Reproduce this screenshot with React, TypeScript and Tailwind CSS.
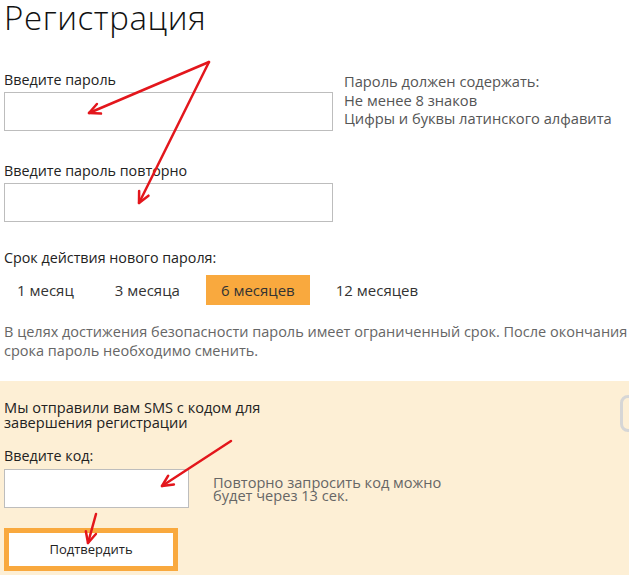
import React from "react";

const RED = "#e3161c";

function Arrow({ x1, y1, x2, y2 }: { x1: number; y1: number; x2: number; y2: number }) {
  const a = Math.atan2(y2 - y1, x2 - x1);
  const len = 12;
  const spread = 0.45;
  const hx1 = x2 - len * Math.cos(a - spread);
  const hy1 = y2 - len * Math.sin(a - spread);
  const hx2 = x2 - len * Math.cos(a + spread);
  const hy2 = y2 - len * Math.sin(a + spread);
  return (
    <g stroke={RED} strokeWidth={2.5} strokeLinecap="round" strokeLinejoin="round" fill="none">
      <line x1={x1} y1={y1} x2={x2} y2={y2} />
      <polyline points={`${hx1},${hy1} ${x2},${y2} ${hx2},${hy2}`} />
    </g>
  );
}

const periods = ["1 месяц", "3 месяца", "6 месяцев", "12 месяцев"];

export default function App() {
  return (
    <div className="relative w-[629px] h-[575px] overflow-hidden bg-white font-['Open_Sans','Noto_Sans',sans-serif] text-[#222]">
      <div className="px-[4px]">
        <h1 className="text-[33px] leading-[36px] font-light text-[#111] tracking-[0.6px]">Регистрация</h1>

        {/* Password fields */}
        <div className="flex mt-[34px]">
          <div className="w-[329px]">
            <label className="block text-[14.3px] leading-[20px] text-[#222]">Введите пароль</label>
            <div className="mt-[2px] h-[39px] border border-[#bdbdbd] bg-white" />
            <label className="block mt-[30px] text-[14.3px] leading-[20px] text-[#222]">Введите пароль повторно</label>
            <div className="mt-[2px] h-[39px] border border-[#bdbdbd] bg-white" />
          </div>
          <div className="ml-[11px] mt-[2px] text-[14.7px] leading-[18.5px] text-[#555] whitespace-nowrap">
            <p>Пароль должен содержать:</p>
            <p>Не менее 8 знаков</p>
            <p>Цифры и буквы латинского алфавита</p>
          </div>
        </div>

        {/* Password lifetime */}
        <p className="mt-[26px] text-[14.3px] leading-[20px] text-[#222]">Срок действия нового пароля:</p>
        <div className="flex gap-[11px] mt-[7px] -ml-[2px]">
          {periods.map((p) => (
            <div
              key={p}
              className={`h-[30px] px-[15px] flex items-center text-[15px] text-[#333] ${p === "6 месяцев" ? "bg-[#f9a93e]" : ""}`}
            >
              {p}
            </div>
          ))}
        </div>
        <p className="mt-[17px] text-[14.5px] leading-[19px] text-[#666] whitespace-nowrap">
          В целях достижения безопасности пароль имеет ограниченный срок. После окончания
          <br />
          срока пароль необходимо сменить.
        </p>
      </div>

      {/* SMS confirmation */}
      <div className="absolute left-0 right-0 top-[381px] bottom-0 bg-[#fdefd5] px-[4px] pt-[19px]">
        <p className="text-[14.6px] leading-[15px] text-[#222]">
          Мы отправили вам SMS с кодом для
          <br />
          завершения регистрации
        </p>
        <p className="mt-[16px] text-[14.3px] leading-[20px] text-[#222]">Введите код:</p>
        <div className="flex items-center mt-[3px]">
          <div className="w-[185px] h-[39px] border border-[#bdbdbd] bg-white" />
          <p className="ml-[24px] text-[14.6px] leading-[13px] text-[#666]">
            Повторно запросить код можно
            <br />
            будет через 13 сек.
          </p>
        </div>
        <button className="mt-[20px] w-[174px] h-[43px] border-[5px] border-[#f9a93e] bg-white text-[13px] text-[#222]">
          Подтвердить
        </button>
        <div className="absolute left-[620px] top-[14px] w-[40px] h-[37px] border-[3px] border-[#d6d6d6] rounded-[8px]" />
      </div>

      <svg className="absolute inset-0 pointer-events-none" width={629} height={575}>
        <Arrow x1={209} y1={62} x2={89} y2={113} />
        <Arrow x1={209} y1={62} x2={139} y2={203} />
        <Arrow x1={231} y1={441} x2={162} y2={486} />
        <Arrow x1={96} y1={514} x2={88} y2={543} />
      </svg>
    </div>
  );
}
